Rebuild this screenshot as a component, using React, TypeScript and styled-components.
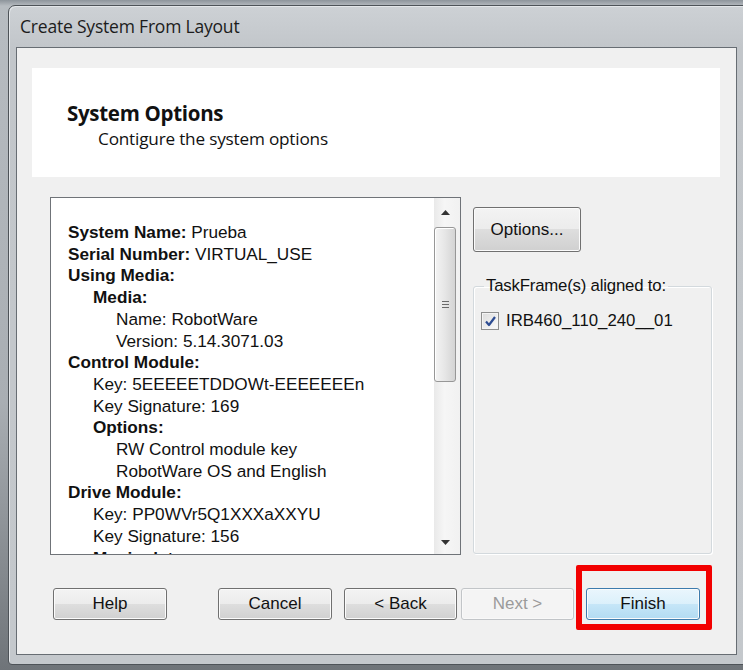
import React from "react";
import styled, { createGlobalStyle } from "styled-components";

const Global = createGlobalStyle`
  html, body { margin: 0; padding: 0; }
  body { background: #9ca2a8; }
  * { box-sizing: border-box; }
`;

const Page = styled.div`
  width: 743px;
  height: 670px;
  overflow: hidden;
  padding: 5px 0 0 8px;
  background: linear-gradient(to bottom, #8d949b 0px, #b7bcc1 6px, #a9aeb3 60%, #6f7479 100%);
`;

const Window = styled.div`
  width: 745px;
  height: 660px;
  border: 1px solid #4e5358;
  border-radius: 7px 7px 4px 4px;
  background: linear-gradient(to bottom, #cdd1d5 0px, #c2c6ca 42px, #c4c8cc 100%);
  box-shadow: inset 1px 1px 0 #e3e6e9;
  display: flex;
  flex-direction: column;
`;

const TitleBar = styled.div`
  height: 41px;
  display: flex;
  align-items: center;
  padding: 0 0 2px 11px;
  font-family: "Open Sans", "Noto Sans", sans-serif;
  font-size: 17.5px;
  color: #1c1c1c;
  letter-spacing: -0.2px;
`;

const Client = styled.div`
  margin-left: 7px;
  width: 721px;
  height: 608px;
  border: 1px solid #676d73;
  background: #f0f0f0;
  display: flex;
  flex-direction: column;
`;

const Header = styled.div`
  margin: 20px 16px 0 15px;
  height: 109px;
  background: #ffffff;
  padding: 32px 0 0 35px;
  font-family: "Open Sans", "Noto Sans", sans-serif;
  color: #111;
`;

const HeaderTitle = styled.div`
  font-size: 20.5px;
  font-weight: 700;
  line-height: 26px;
  letter-spacing: -0.3px;
`;

const HeaderSub = styled.div`
  margin: 2px 0 0 31px;
  font-size: 17.2px;
  line-height: 22px;
  letter-spacing: -0.2px;
`;

const Main = styled.div`
  display: flex;
  margin: 20px 0 0 33px;
  gap: 12px;
  height: 358px;
`;

const ListBox = styled.div`
  width: 411px;
  height: 358px;
  border: 1px solid #6f7378;
  background: #fff;
  display: flex;
`;

const ListContent = styled.div`
  flex: 1;
  overflow: hidden;
  padding: 24px 0 0 17px;
  font-family: "Liberation Sans", Arial, sans-serif;
  font-size: 17.2px;
  line-height: 21.7px;
  color: #111;
`;

const Line = styled.div<{ $level: number }>`
  padding-left: ${(p) => [0, 25, 48][p.$level]}px;
  white-space: nowrap;
`;

const B = styled.b`
  font-weight: 700;
`;

const ScrollBar = styled.div`
  width: 26px;
  display: flex;
  flex-direction: column;
  background: linear-gradient(to right, #e9e9e9, #f6f6f6 40%, #f1f1f1);
`;

const ArrowBtn = styled.div<{ $h: number }>`
  height: ${(p) => p.$h}px;
  display: flex;
  align-items: center;
  justify-content: center;
  padding-right: 4px;
`;

const Track = styled.div`
  flex: 1;
  padding-right: 4px;
`;

const Thumb = styled.div`
  height: 155px;
  border: 1px solid #979797;
  border-radius: 3px;
  background: linear-gradient(to right, #f4f4f4, #e6e6e6 50%, #d4d4d4);
  box-shadow: inset 1px 1px 0 #fff;
  display: flex;
  align-items: center;
  justify-content: center;
`;

const RightCol = styled.div`
  width: 239px;
  display: flex;
  flex-direction: column;
  padding-top: 10px;
`;

const Button = styled.button<{ $w: number; $h?: number; $variant?: "default" | "disabled" | "primary" }>`
  width: ${(p) => p.$w}px;
  height: ${(p) => p.$h ?? 32}px;
  padding: 0;
  font-family: "Liberation Sans", Arial, sans-serif;
  font-size: 17px;
  color: ${(p) => (p.$variant === "disabled" ? "#9b9b9b" : "#111")};
  border-radius: 3px;
  border: 1px solid
    ${(p) => (p.$variant === "disabled" ? "#c2c5c8" : p.$variant === "primary" ? "#3d7bad" : "#707070")};
  background: ${(p) =>
    p.$variant === "disabled"
      ? "#f4f4f4"
      : p.$variant === "primary"
      ? "linear-gradient(to bottom, #eaf6fd 0%, #dbf0fb 50%, #c6e6f8 50%, #b2dbf2 100%)"
      : "linear-gradient(to bottom, #f3f3f3 0%, #ececec 50%, #dedede 50%, #d0d0d0 100%)"};
  box-shadow: inset 0 0 0 1px ${(p) => (p.$variant === "disabled" ? "#f9f9f9" : "#fbfbfb")};
  position: relative;
`;

const GroupBox = styled.fieldset`
  margin: 24px 0 0 0;
  padding: 0 0 0 7px;
  height: 278px;
  border: 1px solid #d3d9dd;
  border-radius: 3px;
  box-shadow: inset 1px 1px 0 #fff, 1px 1px 0 #fff;
  min-width: 0;
`;

const Legend = styled.legend`
  margin-left: 3px;
  padding: 0 2px;
  font-family: "Liberation Sans", Arial, sans-serif;
  font-size: 16.8px;
  line-height: 20px;
  color: #111;
  letter-spacing: -0.2px;
`;

const CheckRow = styled.label`
  display: flex;
  align-items: center;
  gap: 7px;
  margin-top: 15px;
  font-family: "Liberation Sans", Arial, sans-serif;
  font-size: 16.8px;
  color: #111;
`;

const CheckBox = styled.span`
  width: 18px;
  height: 18px;
  border: 1px solid #8e8f8f;
  background: linear-gradient(135deg, #dcdcdc, #fbfbfb);
  box-shadow: inset 0 0 0 1px #f4f4f4;
  display: flex;
  align-items: center;
  justify-content: center;
`;

const ButtonRow = styled.div`
  display: flex;
  margin: 33px 0 0 36px;
`;

const Spacer = styled.div<{ $w: number }>`
  width: ${(p) => p.$w}px;
  flex: none;
`;

const Highlight = styled.div`
  position: absolute;
  left: -11px;
  right: -13px;
  top: -24px;
  bottom: -11px;
  border: 6px solid #f20000;
  border-radius: 2px;
  pointer-events: none;
`;

const lines: { level: number; bold?: string; text?: string }[] = [
  { level: 0, bold: "System Name:", text: " Prueba" },
  { level: 0, bold: "Serial Number:", text: " VIRTUAL_USE" },
  { level: 0, bold: "Using Media:" },
  { level: 1, bold: "Media:" },
  { level: 2, text: "Name: RobotWare" },
  { level: 2, text: "Version: 5.14.3071.03" },
  { level: 0, bold: "Control Module:" },
  { level: 1, text: "Key: 5EEEEETDDOWt-EEEEEEEn" },
  { level: 1, text: "Key Signature: 169" },
  { level: 1, bold: "Options:" },
  { level: 2, text: "RW Control module key" },
  { level: 2, text: "RobotWare OS and English" },
  { level: 0, bold: "Drive Module:" },
  { level: 1, text: "Key: PP0WVr5Q1XXXaXXYU" },
  { level: 1, text: "Key Signature: 156" },
  { level: 1, bold: "Manipulator:" },
];

export default function App() {
  return (
    <>
      <Global />
      <Page>
        <Window>
          <TitleBar>Create System From Layout</TitleBar>
          <Client>
            <Header>
              <HeaderTitle>System Options</HeaderTitle>
              <HeaderSub>Contigure the system options</HeaderSub>
            </Header>
            <Main>
              <ListBox>
                <ListContent>
                  {lines.map((l, i) => (
                    <Line key={i} $level={l.level}>
                      {l.bold && <B>{l.bold}</B>}
                      {l.text}
                    </Line>
                  ))}
                </ListContent>
                <ScrollBar>
                  <ArrowBtn $h={29}>
                    <svg width="9" height="5" viewBox="0 0 9 5">
                      <path d="M0 5 L4.5 0 L9 5 Z" fill="#333" />
                    </svg>
                  </ArrowBtn>
                  <Track>
                    <Thumb>
                      <svg width="9" height="9" viewBox="0 0 9 9">
                        <path d="M1 1.5 H8 M1 4.5 H8 M1 7.5 H8" stroke="#6a6a6a" strokeWidth="1" />
                      </svg>
                    </Thumb>
                  </Track>
                  <ArrowBtn $h={24}>
                    <svg width="9" height="5" viewBox="0 0 9 5">
                      <path d="M0 0 L4.5 5 L9 0 Z" fill="#333" />
                    </svg>
                  </ArrowBtn>
                </ScrollBar>
              </ListBox>
              <RightCol>
                <Button $w={108} $h={45}>Options...</Button>
                <GroupBox>
                  <Legend>TaskFrame(s) aligned to:</Legend>
                  <CheckRow>
                    <CheckBox>
                      <svg width="13" height="13" viewBox="0 0 13 13">
                        <path d="M2 6.5 L5 10 L11 2" fill="none" stroke="#2d4c92" strokeWidth="2.2" strokeLinejoin="round" />
                      </svg>
                    </CheckBox>
                    IRB460_110_240__01
                  </CheckRow>
                </GroupBox>
              </RightCol>
            </Main>
            <ButtonRow>
              <Button $w={114}>Help</Button>
              <Spacer $w={51} />
              <Button $w={114}>Cancel</Button>
              <Spacer $w={12} />
              <Button $w={113}>&lt; Back</Button>
              <Spacer $w={4} />
              <Button $w={113} $variant="disabled">Next &gt;</Button>
              <Spacer $w={12} />
              <Button $w={114} $variant="primary">
                Finish
                <Highlight />
              </Button>
            </ButtonRow>
          </Client>
        </Window>
      </Page>
    </>
  );
}
